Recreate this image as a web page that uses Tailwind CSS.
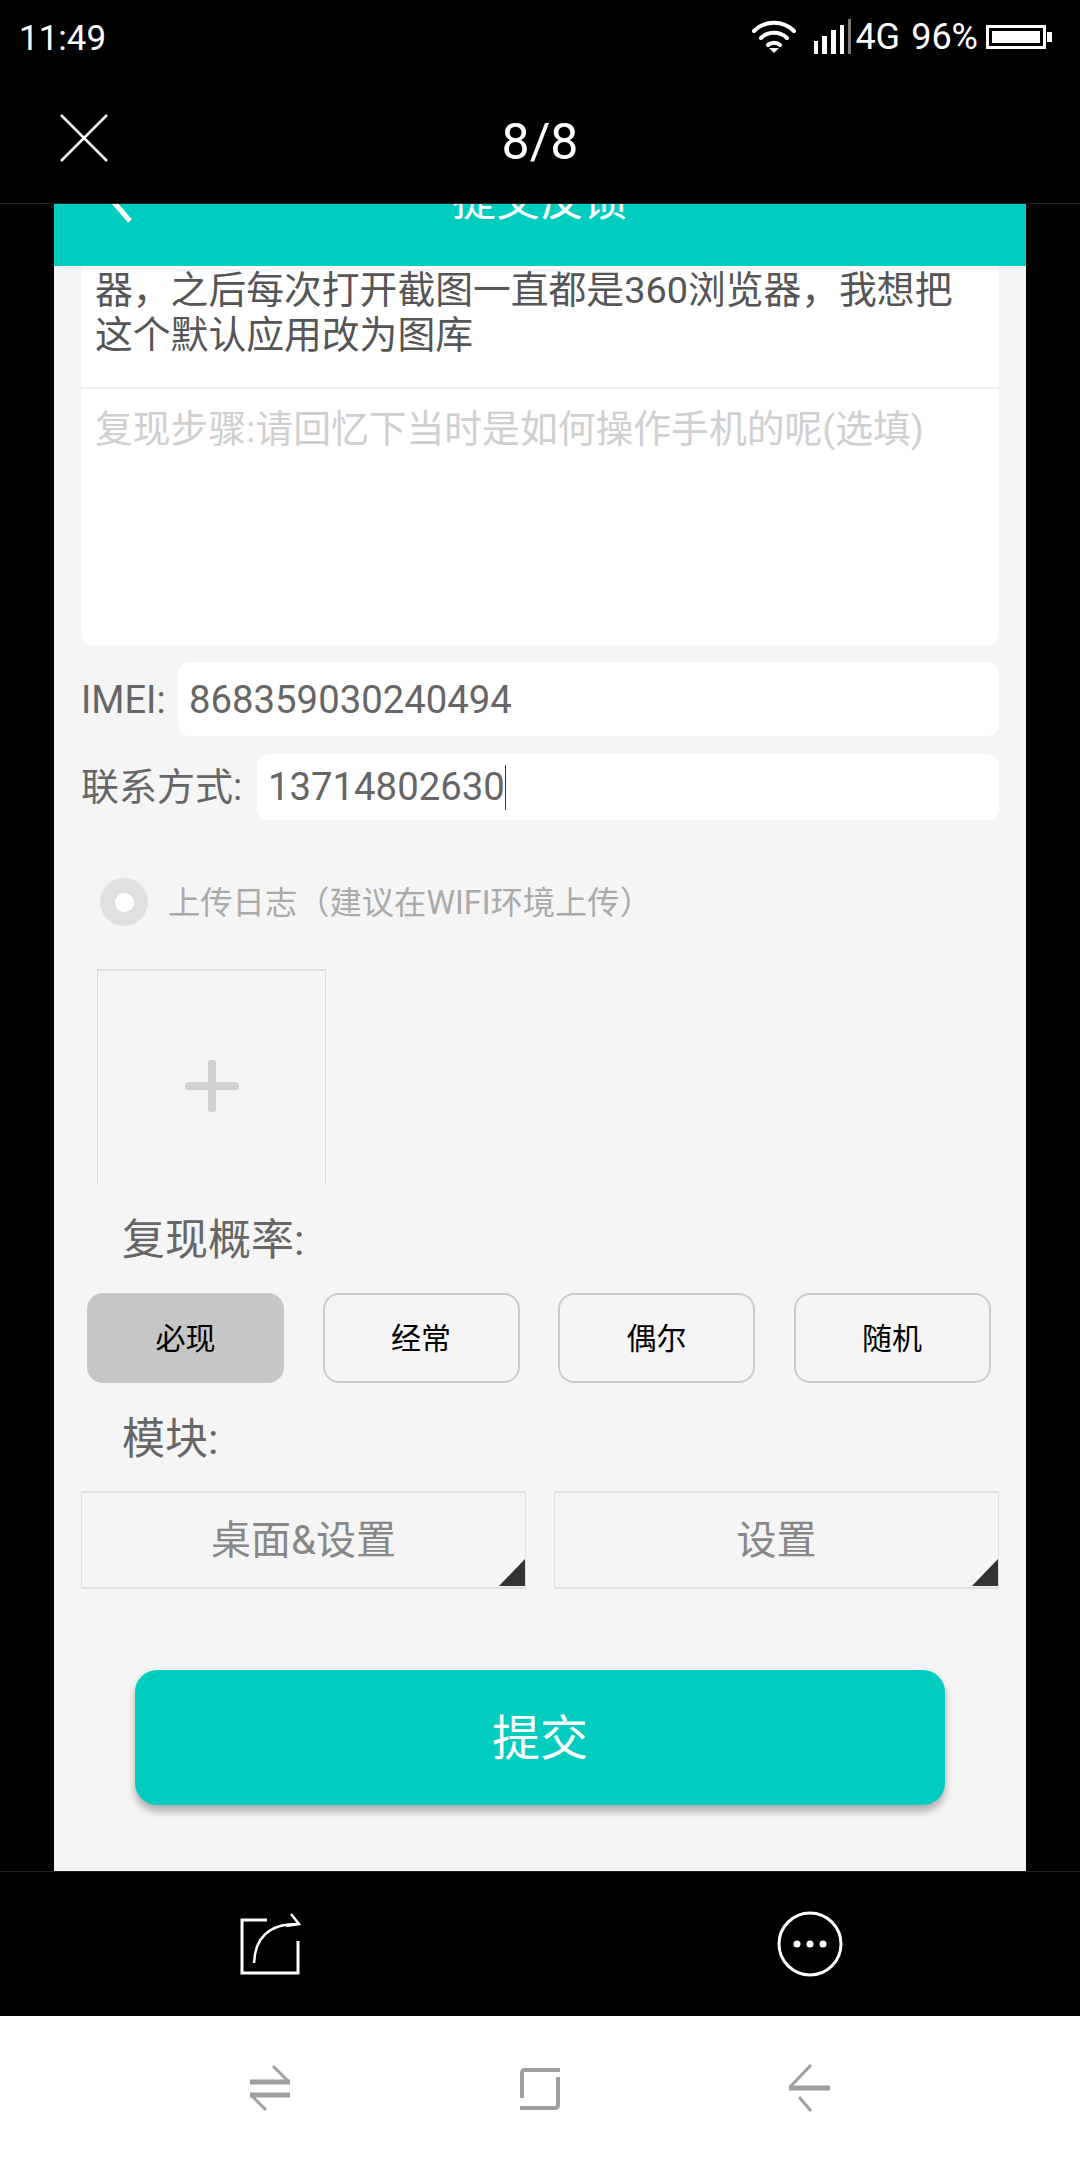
<!DOCTYPE html>
<html lang="en">
<head>
    <meta charset="UTF-8">
    <meta name="viewport" content="width=device-width, initial-scale=1.0">
    <title>提交反馈</title>
    <script src="https://cdn.jsdelivr.net/npm/@tailwindcss/browser@4"></script>
</head>
<body class="bg-black font-['Roboto','Noto_Sans_CJK_SC',sans-serif]">
    <div class="w-[1080px] h-[2160px] flex flex-col overflow-hidden">
        <!-- status bar + viewer title -->
        <div class="h-[204px] shrink-0 bg-black border-b border-[#222] text-white">
            <div class="h-[74px] flex items-center pl-[19px] pr-[28px]">
                <span class="text-[35px] leading-none pt-[2px]">11:49</span>
                <svg class="ml-auto" width="44" height="34" viewBox="0 0 44 34" fill="none" stroke="white" stroke-width="4" stroke-linecap="round">
                    <path d="M2 11C13 0 31 0 42 11"/>
                    <path d="M9 18C16 11 28 11 35 18"/>
                    <path d="M16 25C19 22 25 22 28 25"/>
                    <path d="M22 33l-5-5h10z" fill="white" stroke="none"/>
                </svg>
                <svg class="ml-[18px]" width="38" height="36" viewBox="0 0 38 36">
                    <rect x="0" y="22" width="4" height="13" fill="white"/>
                    <rect x="8" y="17" width="5" height="18" fill="white"/>
                    <rect x="17" y="11" width="5" height="24" fill="white"/>
                    <rect x="26" y="6" width="4" height="29" fill="white"/>
                    <rect x="34" y="0" width="3" height="35" fill="#777"/>
                </svg>
                <span class="ml-[3px] text-[36px] leading-none">4G</span>
                <span class="ml-[11px] text-[36px] leading-none">96%</span>
                <div class="ml-[8px] w-[60px] h-[24px] border-[3px] border-white p-[3px]">
                    <div class="w-full h-full bg-white"></div>
                </div>
                <div class="w-[5px] h-[10px] ml-[1px] bg-white"></div>
            </div>
            <div class="h-[130px] relative flex items-center justify-center">
                <svg class="absolute left-[59px] top-[39px]" width="50" height="50" viewBox="0 0 50 50" stroke="white" stroke-width="2.5">
                    <path d="M2 2L48 48M48 2L2 48"/>
                </svg>
                <span class="text-[50px] leading-none pt-[5px]">8/8</span>
            </div>
        </div>

        <!-- page inside the viewer -->
        <div class="h-[1667px] shrink-0 mx-[54px] bg-[#f5f5f5] overflow-hidden">
            <div class="h-[62px] bg-[#00ccc0] overflow-hidden relative flex justify-center">
                <svg class="absolute left-[50px] top-0" width="34" height="20" viewBox="0 0 34 20" stroke="white" stroke-width="5" fill="none">
                    <path d="M6 -6L26 17"/>
                </svg>
                <span class="text-[44px] leading-[44px] h-[44px] -mt-[25px] text-white">提交反馈</span>
            </div>

            <div class="mx-[27px]">
                <div class="bg-white rounded-b-xl h-[379px] text-[37.8px] leading-[45px] text-[#555]">
                    <div class="h-[123px] pt-[2px] pl-[14px] border-b-2 border-[#eeeeee]">
                        器，之后每次打开截图一直都是360浏览器，我想把<br>这个默认应用改为图库
                    </div>
                    <div class="pt-[18px] pl-[14px] text-[#cfcfcf]">复现步骤:请回忆下当时是如何操作手机的呢(选填)</div>
                </div>

                <div class="mt-[17px] h-[74px] flex items-center text-[#666]">
                    <span class="w-[97px] shrink-0 text-[38px] pt-[2px]">IMEI:</span>
                    <div class="flex-1 h-full bg-white rounded-xl flex items-center pl-[11px] pt-[2px] text-[38.3px]">868359030240494</div>
                </div>
                <div class="mt-[18px] h-[66px] flex items-center text-[#666]">
                    <span class="w-[176px] shrink-0 text-[38px]">联系方式:</span>
                    <div class="flex-1 h-full bg-white rounded-xl flex items-center pl-[11px] text-[38.3px]">
                        13714802630<span class="w-px h-[45px] bg-[#333]"></span>
                    </div>
                </div>

                <div class="mt-[58px] h-[48px] ml-[19px] flex items-center">
                    <div class="w-[48px] h-[48px] rounded-full bg-[#e0e0e0] flex items-center justify-center">
                        <div class="w-[19px] h-[19px] rounded-full bg-white"></div>
                    </div>
                    <span class="ml-[20px] pt-[2px] text-[32.3px] text-[#aaaaaa]">上传日志（建议在WIFI环境上传）</span>
                </div>

                <div class="mt-[43px] ml-[16px] w-[229px] h-[216px] pt-[16px] border-x border-t-2 border-[#dddddd] flex items-center justify-center">
                    <svg width="54" height="52" viewBox="0 0 54 52" fill="#d0d0d0">
                        <rect x="0" y="22" width="54" height="8" rx="3"/>
                        <rect x="23" y="0" width="8" height="52" rx="3"/>
                    </svg>
                </div>

                <div class="mt-[30px] ml-[41px] h-[50px] flex items-center text-[43px] text-[#666]">复现概率:</div>

                <div class="mt-[28px] ml-[6px] flex gap-[38.5px] text-[30px] text-black">
                    <div class="w-[197px] h-[90px] rounded-2xl border-2 border-[#c6c6c6] bg-[#c6c6c6] flex items-center justify-center">必现</div>
                    <div class="w-[197px] h-[90px] rounded-2xl border-2 border-[#cccccc] flex items-center justify-center">经常</div>
                    <div class="w-[197px] h-[90px] rounded-2xl border-2 border-[#cccccc] flex items-center justify-center">偶尔</div>
                    <div class="w-[197px] h-[90px] rounded-2xl border-2 border-[#cccccc] flex items-center justify-center">随机</div>
                </div>

                <div class="mt-[31px] ml-[41px] h-[50px] flex items-center text-[43px] text-[#666]">模块:</div>

                <div class="mt-[27px] flex gap-[28px] text-[40px] text-[#888888]">
                    <div class="relative flex-1 h-[98px] pt-[2px] border-x border-y-2 border-[#e0e0e0] flex items-center justify-center">
                        桌面&amp;设置
                        <svg class="absolute right-0 bottom-[1px]" width="26" height="27" viewBox="0 0 26 27"><path d="M26 0V27H0z" fill="#333"/></svg>
                    </div>
                    <div class="relative flex-1 h-[98px] pt-[2px] border-x border-y-2 border-[#e0e0e0] flex items-center justify-center">
                        设置
                        <svg class="absolute right-0 bottom-[1px]" width="26" height="27" viewBox="0 0 26 27"><path d="M26 0V27H0z" fill="#333"/></svg>
                    </div>
                </div>
            </div>

            <div class="mt-[81px] mx-[81px] h-[135px] pt-[2px] rounded-[22px] bg-[#00ccc0] shadow-[0_6px_8px_rgba(0,0,0,0.3)] flex items-center justify-center text-[48px] text-white">提交</div>
        </div>

        <!-- viewer actions -->
        <div class="h-[145px] shrink-0 bg-black border-t border-[#222] flex">
            <div class="w-[540px] flex items-center justify-center pl-[2px]">
                <svg width="64" height="66" viewBox="0 0 64 66" fill="none" stroke="white" stroke-width="3">
                    <path d="M28 9H3V62H59V30"/>
                    <path d="M15 52C16 30 27 13 58 13" stroke-width="2.5"/>
                    <path d="M52 3L60 13L47 15" stroke-width="2.5"/>
                </svg>
            </div>
            <div class="w-[540px] flex items-center justify-center">
                <svg width="66" height="66" viewBox="0 0 66 66" fill="white">
                    <circle cx="33" cy="33" r="31" fill="none" stroke="white" stroke-width="3"/>
                    <circle cx="20" cy="33" r="3.5"/>
                    <circle cx="33" cy="33" r="3.5"/>
                    <circle cx="46" cy="33" r="3.5"/>
                </svg>
            </div>
        </div>

        <!-- system nav -->
        <div class="h-[144px] shrink-0 bg-white flex items-center justify-center gap-[226px]">
            <svg width="44" height="48" viewBox="0 0 44 48" fill="none" stroke="#a09ea0" stroke-width="4">
                <path d="M2 18H42" stroke-width="5"/>
                <path d="M25 2L41 18" stroke-width="3"/>
                <path d="M2 31H42" stroke-width="5"/>
                <path d="M3 31L18 46" stroke-width="3"/>
            </svg>
            <svg width="44" height="44" viewBox="0 0 44 44" fill="none" stroke="#a09ea0" stroke-width="4">
                <path d="M42 4H7Q4 4 4 7V32"/>
                <path d="M2 42H37Q40 42 40 39V11"/>
            </svg>
            <svg class="-translate-x-[2px]" width="44" height="48" viewBox="0 0 44 48" fill="none" stroke="#a09ea0" stroke-width="3">
                <path d="M25 1L4 23"/>
                <path d="M3 24H44" stroke-width="5"/>
                <path d="M13 33L25 47"/>
            </svg>
        </div>
    </div>
</body>
</html>
